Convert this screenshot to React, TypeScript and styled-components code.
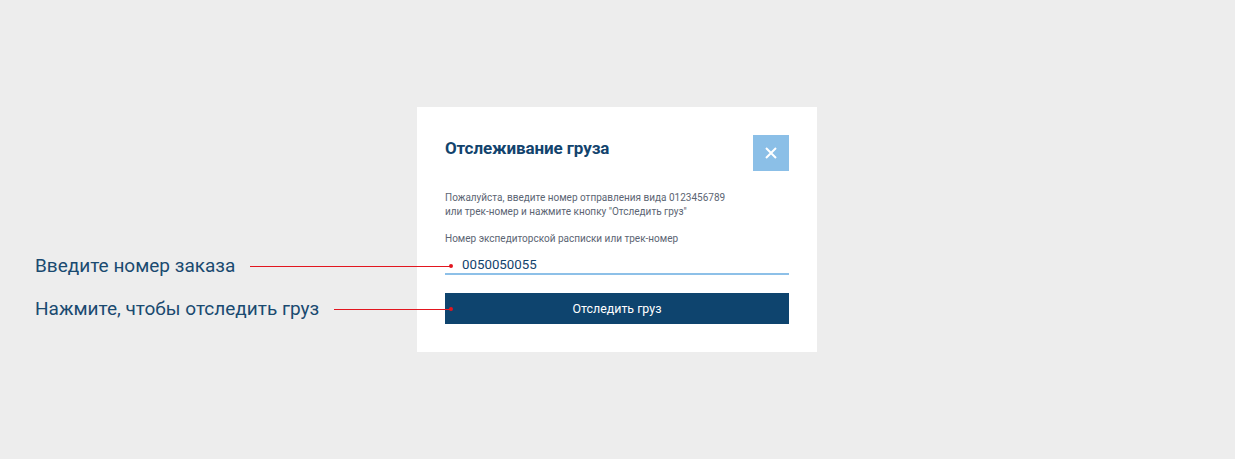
import styled, { createGlobalStyle } from 'styled-components'

const GlobalStyle = createGlobalStyle`
  html, body {
    margin: 0;
    padding: 0;
    background: #ededed;
    font-family: Roboto, "Noto Sans", "Liberation Sans", sans-serif;
  }
`

const Page = styled.div`
  width: 100vw;
  height: 100vh;
  box-sizing: border-box;
  padding-right: 1px;
  display: flex;
  align-items: center;
  justify-content: center;
`

const Card = styled.div`
  width: 400px;
  box-sizing: border-box;
  padding: 28px 28px 28px;
  background: #fff;
  display: flex;
  flex-direction: column;
`

const Header = styled.div`
  display: flex;
  align-items: flex-start;
  justify-content: space-between;
  height: 36px;
`

const Title = styled.h2`
  margin: 3px 0 0;
  font-size: 17px;
  line-height: 20px;
  font-weight: 700;
  color: #12436d;
  letter-spacing: -0.1px;
`

const CloseButton = styled.button`
  width: 36px;
  height: 36px;
  border: none;
  padding: 0;
  background: #8bbfe7;
  display: flex;
  align-items: center;
  justify-content: center;
  cursor: pointer;
`

const Hint = styled.p`
  margin: 20px 0 0;
  font-size: 10px;
  line-height: 14px;
  color: #5c6573;
`

const FieldLabel = styled.label`
  display: block;
  margin-top: 13px;
  font-size: 10px;
  line-height: 14px;
  color: #5c6573;
`

const Field = styled.div`
  position: relative;
  margin-top: 6px;
  border-bottom: 2px solid #8dc0e8;
  height: 21px;
`

const Input = styled.input`
  width: 100%;
  box-sizing: border-box;
  border: none;
  outline: none;
  background: transparent;
  padding: 3px 0 0 17px;
  height: 21px;
  font-family: inherit;
  font-size: 13.3px;
  color: #12436d;
`

const Submit = styled.button`
  position: relative;
  margin-top: 18px;
  height: 31px;
  border: none;
  background: #0e446e;
  color: #fff;
  font-family: inherit;
  font-size: 12.4px;
  cursor: pointer;
`

const Callout = styled.div<{ $top: number }>`
  position: absolute;
  left: -410px;
  width: 418px;
  top: ${p => p.$top}px;
  display: flex;
  align-items: center;
  pointer-events: none;
`

const CalloutText = styled.span`
  font-size: 19px;
  color: #1a4a70;
  white-space: nowrap;
  margin-right: 15px;
  line-height: 24px;
`

const CalloutLine = styled.span`
  flex: 1;
  height: 1px;
  background: #e2161f;
`

const CalloutDot = styled.span`
  width: 4px;
  height: 4px;
  border-radius: 50%;
  background: #e2161f;
  margin-left: -2px;
`

export default function App() {
  return (
    <>
      <GlobalStyle />
      <Page>
        <Card>
          <Header>
            <Title>Отслеживание груза</Title>
            <CloseButton aria-label="Закрыть">
              <svg width="12" height="12" viewBox="0 0 12 12">
                <path d="M1 1 L11 11 M11 1 L1 11" stroke="#fff" strokeWidth="2" />
              </svg>
            </CloseButton>
          </Header>
          <Hint>
            Пожалуйста, введите номер отправления вида 0123456789
            <br />
            или трек-номер и нажмите кнопку "Отследить груз"
          </Hint>
          <FieldLabel htmlFor="track">Номер экспедиторской расписки или трек-номер</FieldLabel>
          <Field>
            <Input id="track" defaultValue="0050050055" />
            <Callout $top={2}>
              <CalloutText>Введите номер заказа</CalloutText>
              <CalloutLine />
              <CalloutDot />
            </Callout>
          </Field>
          <Submit>
            Отследить груз
            <Callout $top={4}>
              <CalloutText>Нажмите, чтобы отследить груз</CalloutText>
              <CalloutLine />
              <CalloutDot />
            </Callout>
          </Submit>
        </Card>
      </Page>
    </>
  )
}
